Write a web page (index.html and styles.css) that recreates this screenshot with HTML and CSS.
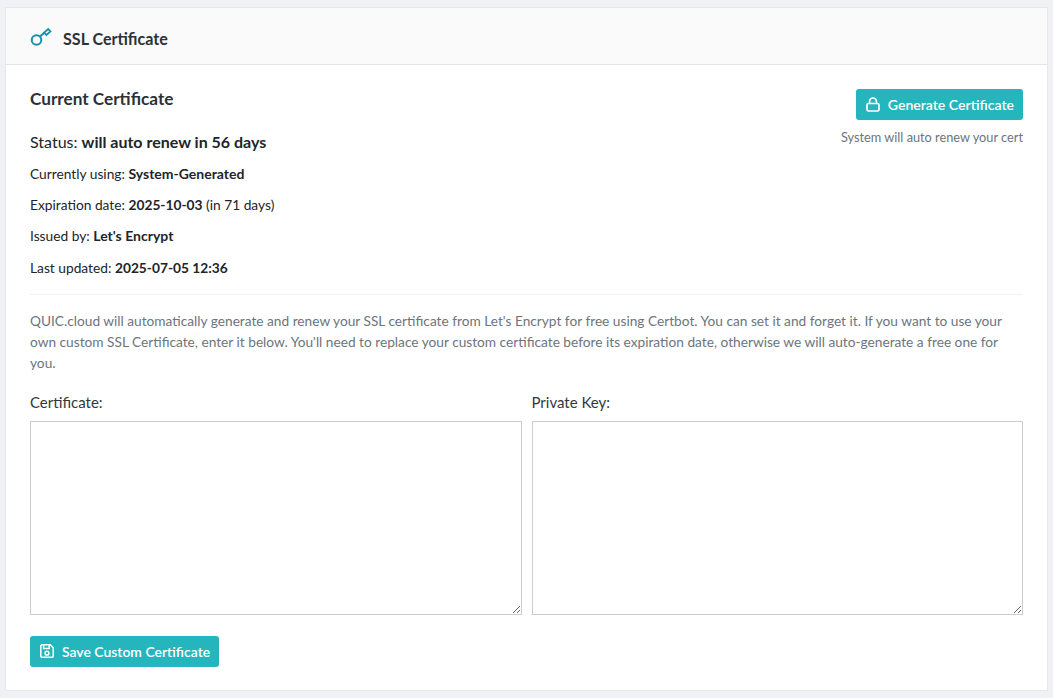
FILE: index.html
```html
<!DOCTYPE html>
<html lang="en">
<head>
<meta charset="utf-8">
<title>SSL Certificate</title>
<link rel="stylesheet" href="styles.css">
</head>
<body>
<section class="card">
  <header class="card-header">
    <svg class="key-icon" width="22" height="20" viewBox="0 0 22 20" fill="none" stroke="#1c8fa8" stroke-width="2">
      <circle cx="6.5" cy="13" r="4.8"/>
      <path d="M10 9.6 L14.5 5.4"/>
      <path d="M14.2 5.6 L16.4 8 L20.4 4.4 L18.2 2 Z" stroke-width="1.8"/>
    </svg>
    <h2 class="card-title">SSL Certificate</h2>
  </header>
  <div class="card-body">
    <div class="top">
      <div class="info">
        <h3 class="info-title">Current Certificate</h3>
        <p class="status">Status: <b>will auto renew in 56 days</b></p>
        <p class="line">Currently using: <b>System-Generated</b></p>
        <p class="line">Expiration date: <b class="num">2025-10-03</b> (in 71 days)</p>
        <p class="line">Issued by: <b>Let's Encrypt</b></p>
        <p class="line">Last updated: <b class="num">2025-07-05 12:36</b></p>
      </div>
      <div class="action">
        <button class="btn generate" type="button">
          <svg class="btn-icon" width="14" height="15" viewBox="0 0 14 15" fill="none" stroke="#fff" stroke-width="1.7">
            <rect x="1" y="6.5" width="12" height="7.5" rx="1.5"/>
            <path d="M3.6 6.5 V4.4 a3.4 3.4 0 0 1 6.8 0 V6.5"/>
          </svg>
          Generate Certificate
        </button>
        <small class="hint">System will auto renew your cert</small>
      </div>
    </div>
    <hr class="rule">
    <p class="desc">QUIC.cloud will automatically generate and renew your SSL certificate from Let's Encrypt for free using Certbot. You can set it and forget it. If you want to use your own custom SSL Certificate, enter it below. You'll need to replace your custom certificate before its expiration date, otherwise we will auto-generate a free one for you.</p>
    <div class="fields">
      <label class="field"><span class="field-label">Certificate:</span><textarea class="area"></textarea></label>
      <label class="field"><span class="field-label">Private Key:</span><textarea class="area"></textarea></label>
    </div>
    <button class="btn save" type="button">
      <svg class="btn-icon" width="14" height="14" viewBox="0 0 14 14" fill="none" stroke="#fff" stroke-width="1.5">
        <path d="M1.7 .8 H10.2 L13.2 3.8 V12 a1.2 1.2 0 0 1 -1.2 1.2 H2 A1.2 1.2 0 0 1 .8 12 V1.7 Z"/>
        <path d="M3.6 1 V4.6 H9.2 V1"/>
        <circle cx="7" cy="9.2" r="1.9"/>
      </svg>
      Save Custom Certificate
    </button>
  </div>
</section>
</body>
</html>
```
FILE: styles.css
```css
* { box-sizing: border-box; }
html, body { height: 100%; }
body {
  margin: 0;
  padding: 7px 5px 7px 5px;
  background: #f0f1f5;
  font-family: Lato, "Liberation Sans", sans-serif;
  color: #212529;
  font-size: 14px;
  line-height: 21px;
}
.card {
  height: 684px;
  background: #fff;
  border: 1px solid #e6e8ec;
  display: flex;
  flex-direction: column;
}
.card-header {
  height: 57px;
  flex: none;
  background: #fafafa;
  border-bottom: 1px solid #e4e6ea;
  display: flex;
  align-items: center;
  padding: 3px 0 0 24px;
}
.key-icon { margin: -1px 11px 0 0; }
.card-title { margin: 2px 0 0; font-size: 16.1px; font-weight: 700; color: #2b3138; }
.card-body { padding: 24px 24px 24px; flex: 1; }
.top { display: flex; justify-content: space-between; }
.info-title { margin: 0 0 21px; font-size: 17.2px; font-weight: 700; line-height: 20px; color: #2b3138; }
.status { margin: 0 0 9px; font-size: 16px; line-height: 24px; }
.line { margin: 0 0 10.2px; line-height: 21px; font-size: 13.75px; }
.line b { font-size: 14px; }
.line .num { font-size: 13.75px; }
.action { display: flex; flex-direction: column; align-items: flex-end; }
.btn {
  display: inline-flex;
  align-items: center;
  height: 31px;
  border: 0;
  border-radius: 3px;
  background: #25b5bc;
  color: #fff;
  font-family: inherit;
  font-size: 13.95px;
  font-weight: 600;
  padding: 0 9px 0 10px;
}
.generate { font-size: 14.05px; }
.btn-icon { margin: 0 8px 0 0; flex: none; }
.hint { margin-top: 7px; font-size: 12.75px; line-height: 20px; color: #6c757d; }
.rule { margin: 6px 0 15px; border: 0; border-top: 1px solid #f0f1f3; }
.desc { margin: 0 0 18px; line-height: 21px; font-size: 13.7px; color: #6c757d; }
.fields { display: grid; grid-template-columns: 1fr 1fr; gap: 10px; }
.field { display: block; }
.field-label { display: block; font-size: 15px; line-height: 22px; margin-bottom: 8px; color: #32383e; }
.area {
  display: block;
  width: 100%;
  height: 194px;
  border: 1px solid #ccc;
  background: #fff;
  border-radius: 0;
  margin: 0;
}
.save { margin-top: 21px; }
```
